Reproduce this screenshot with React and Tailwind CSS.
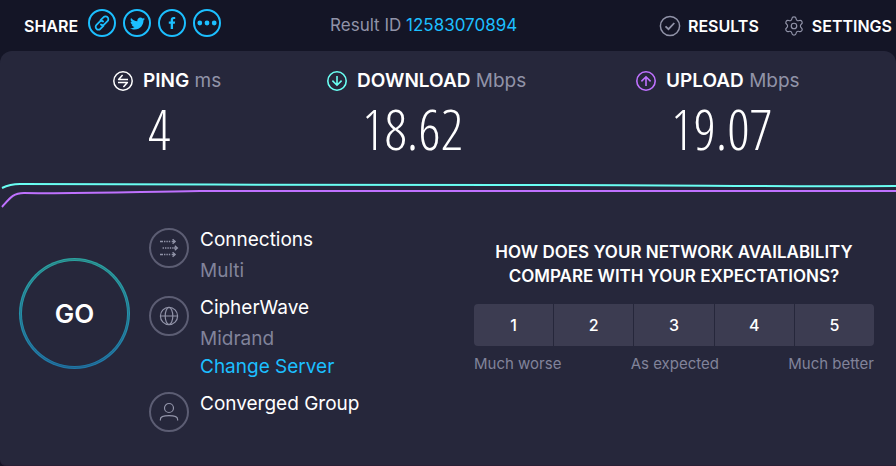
import { FaTwitter, FaFacebookF } from "react-icons/fa";
import { Settings } from "lucide-react";

function LinkIcon() {
  return (
    <svg viewBox="0 0 16 16" className="w-4 h-4" fill="none" stroke="currentColor" strokeWidth="1.8" strokeLinecap="round">
      <path d="M6.6 5.2 9.6 2.2a2.6 2.6 0 0 1 3.9 0 2.7 2.7 0 0 1 0 3.9L10.3 9.3a2.5 2.5 0 0 1-3.4.2" />
      <path d="M9.4 10.8 6.4 13.8a2.6 2.6 0 0 1-3.9 0 2.7 2.7 0 0 1 0-3.9L5.7 6.7a2.5 2.5 0 0 1 3.4-.2" />
    </svg>
  );
}

function DotsIcon() {
  return (
    <svg viewBox="0 0 20 6" className="w-5 h-[6px]" fill="currentColor">
      <circle cx="2.8" cy="3" r="2.4" />
      <circle cx="10" cy="3" r="2.4" />
      <circle cx="17.2" cy="3" r="2.4" />
    </svg>
  );
}

function CheckIcon() {
  return (
    <svg viewBox="0 0 22 22" className="w-[22px] h-[22px] text-[#9193a8]" fill="none" stroke="currentColor" strokeWidth="1.5">
      <circle cx="11" cy="11" r="9.6" />
      <path d="M6.5 11.3 9.5 14.2 15.3 8" strokeWidth="1.8" />
    </svg>
  );
}

function PingIcon() {
  return (
    <svg viewBox="0 0 20 20" className="w-5 h-5 text-white" fill="none" stroke="currentColor" strokeWidth="1.5">
      <circle cx="10" cy="10" r="9.2" />
      <path d="M15 8.4H5.6L9.6 4M5 11.6h9.4l-4 4.4" strokeLinejoin="round" />
    </svg>
  );
}

function DownloadIcon() {
  return (
    <svg viewBox="0 0 20 20" className="w-5 h-5 text-[#6afff3]" fill="none" stroke="currentColor" strokeWidth="1.6">
      <circle cx="10" cy="10" r="9.2" />
      <path d="M10 5v9.2M5.4 9.6l4.6 4.6 4.6-4.6" />
    </svg>
  );
}

function UploadIcon() {
  return (
    <svg viewBox="0 0 20 20" className="w-5 h-5 text-[#bf71ff]" fill="none" stroke="currentColor" strokeWidth="1.6">
      <circle cx="10" cy="10" r="9.2" />
      <path d="M10 15V5.8M5.4 10.4 10 5.8l4.6 4.6" />
    </svg>
  );
}

function ConnectionsIcon() {
  return (
    <svg viewBox="0 0 20 20" className="w-5 h-5" fill="none" stroke="currentColor" strokeWidth="1.3">
      <path d="M1 3.5h3M13 3.5h3M1 16.5h3M13 16.5h3M15 10h3" />
      <path d="M5 3.5h7.5M3.6 10h11M5 16.5h7.5" strokeDasharray="1.4 1" />
      <path d="m13.6 1.2 2.6 2.3-2.6 2.3M15.8 7.7l2.6 2.3-2.6 2.3M13.6 14.2l2.6 2.3-2.6 2.3" />
    </svg>
  );
}

function GlobeIcon() {
  return (
    <svg viewBox="0 0 20 20" className="w-5 h-5" fill="none" stroke="currentColor" strokeWidth="1.2">
      <circle cx="10" cy="10" r="8.6" />
      <ellipse cx="10" cy="10" rx="3.8" ry="8.6" />
      <path d="M1.4 10h17.2" />
    </svg>
  );
}

function UserIcon() {
  return (
    <svg viewBox="0 0 20 20" className="w-5 h-5" fill="none" stroke="currentColor" strokeWidth="1.2">
      <circle cx="10" cy="6" r="4.5" />
      <path d="M1.4 18.4v-1.2c0-2.2 3.2-3.6 8.6-3.6s8.6 1.4 8.6 3.6v1.2" />
    </svg>
  );
}

const shareLinks = [
  { label: "Copy link", icon: <LinkIcon /> },
  { label: "Twitter", icon: <FaTwitter className="w-[15px] h-[15px]" /> },
  { label: "Facebook", icon: <FaFacebookF className="w-3 h-3" /> },
  { label: "More", icon: <DotsIcon /> },
];

const metrics = [
  { name: "PING", unit: "ms", value: "4", icon: <PingIcon /> },
  { name: "DOWNLOAD", unit: "Mbps", value: "18.62", icon: <DownloadIcon /> },
  { name: "UPLOAD", unit: "Mbps", value: "19.07", icon: <UploadIcon /> },
];

const details = [
  { title: "Connections", sub: "Multi", icon: <ConnectionsIcon /> },
  { title: "CipherWave", sub: "Midrand", link: "Change Server", icon: <GlobeIcon /> },
  { title: "Converged Group", icon: <UserIcon /> },
];

function Header() {
  return (
    <header className="flex items-center h-[51px] pl-6 pr-1">
      <span className="text-base font-semibold text-white">SHARE</span>
      <div className="flex gap-[7px] ml-[10px] mb-[5px]">
        {shareLinks.map((item) => (
          <button
            key={item.label}
            aria-label={item.label}
            className="w-7 h-7 rounded-full border-2 border-[#1cbfff] text-[#1cbfff] flex items-center justify-center"
          >
            {item.icon}
          </button>
        ))}
      </div>
      <p className="ml-[109px] text-[17px] text-[#9193a8]">
        Result ID <a href="#result" className="text-[#1cbfff]">12583070894</a>
      </p>
      <nav className="ml-auto flex gap-6 text-base font-semibold text-white">
        <a href="#results" className="flex items-center gap-[7px]">
          <CheckIcon />
          RESULTS
        </a>
        <a href="#settings" className="flex items-center gap-[7px]">
          <Settings className="w-[22px] h-[22px] text-[#9193a8]" strokeWidth={1.3} />
          SETTINGS
        </a>
      </nav>
    </header>
  );
}

function Metric({ name, unit, value, icon }) {
  return (
    <div>
      <h2 className="flex items-center gap-[10px] text-[19px] leading-6 text-[#9193a8]">
        {icon}
        <span>
          <span className="font-semibold text-white">{name}</span> {unit}
        </span>
      </h2>
      <p className="pl-[35px] mt-1 h-[68px] leading-[62px] text-[56px] font-light text-white font-['Open_Sans_Condensed_Light','Open_Sans_Condensed','Roboto',sans-serif]">
        {value}
      </p>
    </div>
  );
}

function SpeedLines() {
  return (
    <svg viewBox="0 0 896 32" preserveAspectRatio="none" className="block w-full h-8 mt-[14px]" fill="none" strokeWidth="2">
      <path d="M2 9C8 6 12 5 20 5C200 5 350 7 550 6C700 6 760 8 896 7" stroke="#6afff3" vectorEffect="non-scaling-stroke" />
      <path d="M2 28C10 19 13 14 24 14C90 15 130 13 200 12C400 12 600 12 896 12" stroke="#bf71ff" vectorEffect="non-scaling-stroke" />
    </svg>
  );
}

function GoButton() {
  return (
    <button className="relative w-[111px] h-[111px] shrink-0 rounded-full p-[3px] bg-linear-to-b from-[#2ba39f] via-[#2492ab] to-[#1f76a8] after:absolute after:inset-px after:rounded-full after:border after:border-[#26273b]/25">
      <span className="flex w-full h-full items-center justify-center rounded-full bg-[#26273b] text-[26px] font-semibold text-white">
        GO
      </span>
    </button>
  );
}

function Survey() {
  return (
    <section className="w-[400px] text-center">
      <h3 className="text-[17px] leading-6 font-semibold text-white">
        HOW DOES YOUR NETWORK AVAILABILITY COMPARE WITH YOUR EXPECTATIONS?
      </h3>
      <div className="mt-4 grid grid-cols-5 gap-px rounded overflow-hidden">
        {[1, 2, 3, 4, 5].map((n) => (
          <button key={n} className="h-[42px] bg-[#3c3c51] text-base font-medium text-white">
            {n}
          </button>
        ))}
      </div>
      <div className="mt-2 flex justify-between text-[15px] leading-5 text-[#81839a]">
        <span>Much worse</span>
        <span>As expected</span>
        <span>Much better</span>
      </div>
    </section>
  );
}

export default function App() {
  return (
    <div className="min-h-screen flex flex-col bg-[#141526] font-['Inter',sans-serif]">
      <Header />
      <main className="flex-1 rounded-t-xl rounded-bl-md border-b border-[#291f35] bg-[#26273b] overflow-hidden">
        <div className="grid grid-cols-[214fr_309fr_260fr] pl-[113px] pt-[18px]">
          {metrics.map((m) => (
            <Metric key={m.name} {...m} />
          ))}
        </div>
        <SpeedLines />
        <div className="flex items-start pl-[19px] pr-[22px] mt-[17px]">
          <div className="mt-[30px]">
            <GoButton />
          </div>
          <ul className="ml-[19px] flex flex-col gap-[11px]">
            {details.map((d) => (
              <li key={d.title} className="flex gap-[11px]">
                <span className="w-10 h-10 shrink-0 rounded-full border-2 border-[#5c5d73] text-[#9193a8] flex items-center justify-center">
                  {d.icon}
                </span>
                <div className="text-[19px]">
                  <p className="leading-6 text-white">{d.title}</p>
                  {d.sub && <p className="mt-[5px] leading-7 text-[#81839a]">{d.sub}</p>}
                  {d.link && <a href="#servers" className="block leading-7 text-[#1cbfff]">{d.link}</a>}
                </div>
              </li>
            ))}
          </ul>
          <div className="ml-auto mt-3">
            <Survey />
          </div>
        </div>
      </main>
    </div>
  );
}
